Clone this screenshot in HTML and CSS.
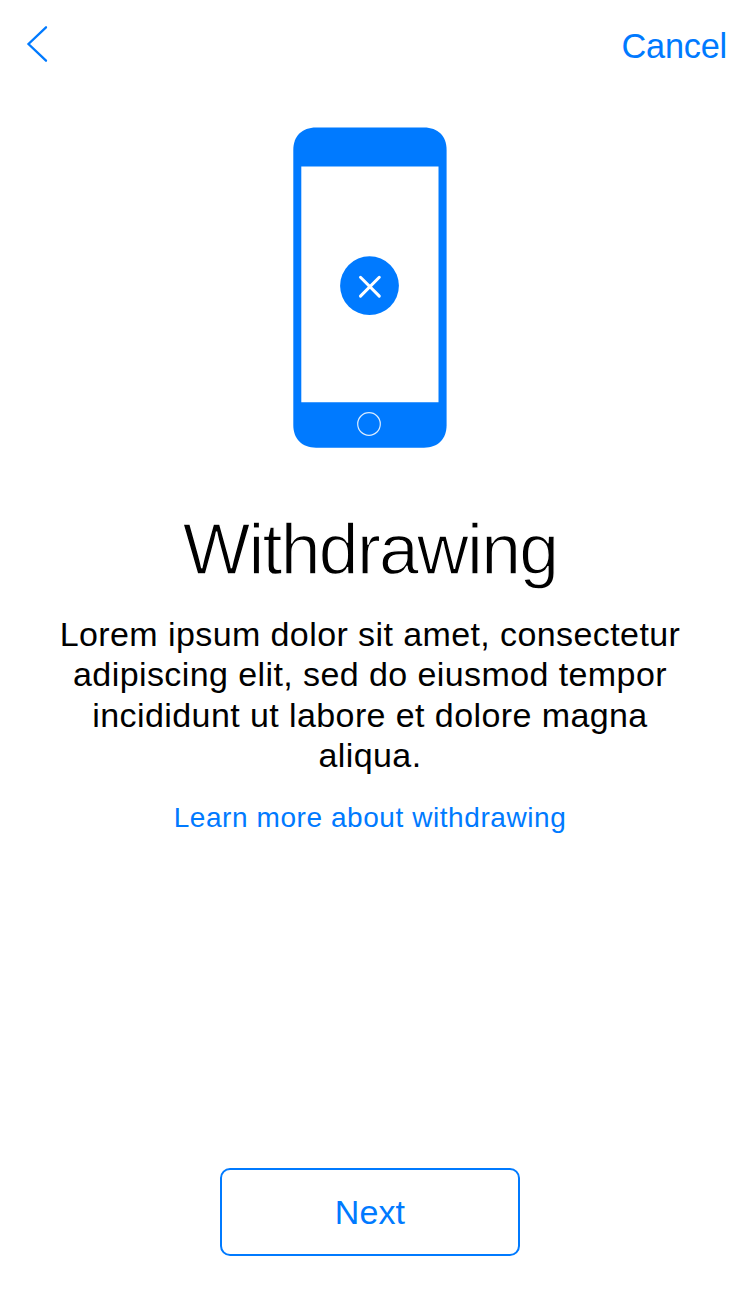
FILE: index.html
```html
<!DOCTYPE html>
<html lang="en">
<head>
<meta charset="utf-8">
<title>Withdrawing</title>
<link rel="stylesheet" href="styles.css">
</head>
<body>
<main class="screen">
  <header class="nav">
    <button class="back" aria-label="Back"><svg width="22" height="38" viewBox="0 0 22 38"><path d="M20 2.300 2.500 19 20 35.700" fill="none" stroke="currentColor" stroke-width="2.300" stroke-linecap="round"/></svg></button>
    <button class="cancel">Cancel</button>
  </header>
  <svg class="phone" width="154" height="322" viewBox="0 0 154 322">
    <path d="M23 .5H131C145 .5 153.600 9 153.600 23V298C153.600 312 145 320.700 131 320.700H23C9 320.700 .3 312 .3 298V23C.3 9 9 .5 23 .5Z" fill="#007aff"/>
    <path d="M8.300 39.500h137.200v235.700H8.300z" fill="#fff"/>
    <circle cx="76.500" cy="158.700" r="29.400" fill="#007aff"/>
    <path d="m67.500 150.300 18.800 18.800m0-18.800-18.800 18.800" stroke="#fff" stroke-width="3" stroke-linecap="round"/>
    <circle cx="76" cy="297" r="11.300" fill="none" stroke="#fff" stroke-opacity=".85" stroke-width="1.200"/>
  </svg>
  <h1 class="title">Withdrawing</h1>
  <p class="copy">Lorem ipsum dolor sit amet, consectetur adipiscing elit, sed do eiusmod tempor incididunt ut labore et dolore magna aliqua.</p>
  <a class="learn">Learn more about withdrawing</a>
  <button class="next">Next</button>
</main>
</body>
</html>
```
FILE: styles.css
```css
* { box-sizing: border-box; }
body { margin: 0; background: #fff; color: #000; font-family: "Liberation Sans", Arial, sans-serif; }
button { font: inherit; background: none; border: 0; padding: 0; color: #007aff; }
.screen { width: 745px; height: 1295px; display: flex; flex-direction: column; align-items: center; padding-right: 5px; }
.nav { width: 745px; height: 127px; margin-right: -5px; padding: 25px 18px 0 26px; display: flex; justify-content: space-between; align-items: flex-start; flex: none; }
.back svg, .phone { display: block; }
.cancel { font-size: 34.300px; line-height: 42px; letter-spacing: -.2px; }
.phone { flex: none; }
/* A background-coloured outline thins the strokes to a light weight. */
.title { margin: 58px 0 0; font-size: 71.500px; line-height: 84px; font-weight: 400; letter-spacing: -1.700px; -webkit-text-stroke: 1.300px #fff; }
.copy { width: 640px; margin: 23px 0 0; font-size: 34px; line-height: 40.400px; letter-spacing: .41px; text-align: center; }
.learn { margin-top: 24px; font-size: 28px; line-height: 36px; letter-spacing: .57px; color: #007aff; }
.next { width: 300px; height: 88px; margin-top: auto; margin-bottom: 39px; border: 2px solid #007aff; border-radius: 10px; font-size: 34px; line-height: 40px; letter-spacing: .1px; }
```
